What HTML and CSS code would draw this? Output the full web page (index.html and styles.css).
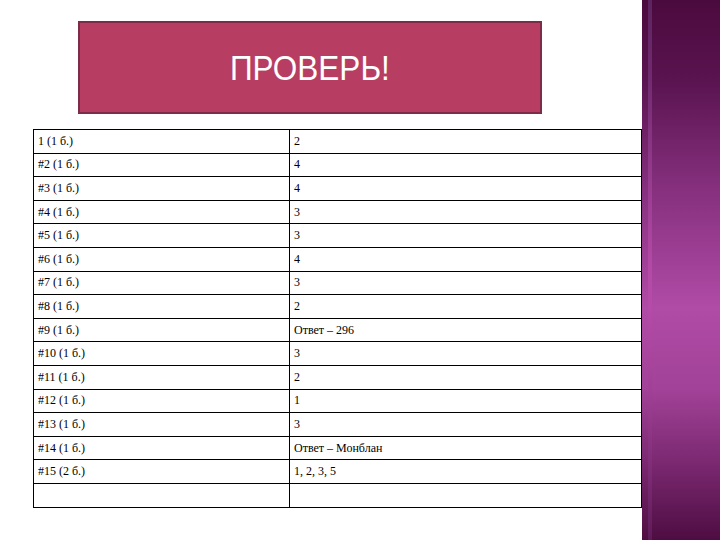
FILE: index.html
```html
<!DOCTYPE html>
<html>
<head>
<meta charset="utf-8">
<link rel="stylesheet" href="styles.css">
</head>
<body>
<div class="slide">
  <div class="main">
    <div class="title"><span class="title-text">ПРОВЕРЬ!</span></div>
    <table class="answers">
      <tr><td>1 (1 б.)</td><td>2</td></tr>
      <tr><td>#2 (1 б.)</td><td>4</td></tr>
      <tr><td>#3 (1 б.)</td><td>4</td></tr>
      <tr><td>#4 (1 б.)</td><td>3</td></tr>
      <tr><td>#5 (1 б.)</td><td>3</td></tr>
      <tr><td>#6 (1 б.)</td><td>4</td></tr>
      <tr><td>#7 (1 б.)</td><td>3</td></tr>
      <tr><td>#8 (1 б.)</td><td>2</td></tr>
      <tr><td>#9 (1 б.)</td><td>Ответ – 296</td></tr>
      <tr><td>#10 (1 б.)</td><td>3</td></tr>
      <tr><td>#11 (1 б.)</td><td>2</td></tr>
      <tr><td>#12 (1 б.)</td><td>1</td></tr>
      <tr><td>#13 (1 б.)</td><td>3</td></tr>
      <tr><td>#14 (1 б.)</td><td>Ответ – Монблан</td></tr>
      <tr><td>#15 (2 б.)</td><td>1, 2, 3, 5</td></tr>
      <tr><td></td><td></td></tr>
    </table>
  </div>
  <div class="strip"><div class="strip-line"></div></div>
</div>
</body>
</html>
```
FILE: styles.css
```css
html, body {
  margin: 0;
  padding: 0;
  background: #ffffff;
}
.slide {
  display: flex;
  width: 720px;
  height: 540px;
  overflow: hidden;
}
.main {
  width: 642px;
  flex: none;
  background: #ffffff;
}
.title {
  box-sizing: border-box;
  width: 464px;
  height: 93px;
  margin: 21px 0 0 78px;
  background: #b83d62;
  border: 2px solid #7c2c48;
  display: flex;
  justify-content: center;
  align-items: center;
  padding: 1px 0 0 0;
}
.title-text {
  font-family: "Liberation Sans", Arial, sans-serif;
  font-size: 35px;
  color: #ffffff;
  display: inline-block;
  transform: scaleX(0.9);
}
.answers {
  margin: 15px 0 0 33px;
  width: 609px;
  border-collapse: collapse;
  font-family: "Liberation Serif", "DejaVu Serif", "Times New Roman", serif;
  font-size: 12px;
  color: #000000;
}
.answers td {
  border: 1px solid #000000;
  height: 23.6px;
  padding: 0 0 0 4px;
  vertical-align: middle;
  box-sizing: border-box;
}
.answers td:first-child {
  width: 256px;
}
.strip {
  flex: 1;
  position: relative;
  background: linear-gradient(180deg, #4b0a3e 0%, #5a1450 15%, #86307e 35%, #b04ba6 57%, #a24298 72%, #7a2870 86%, #4e0d42 100%);
}
.strip-line {
  position: absolute;
  left: 6px;
  top: 0;
  bottom: 0;
  width: 4px;
  background: linear-gradient(180deg, rgba(110,60,130,0.5) 0%, rgba(200,80,180,0.5) 50%, rgba(110,40,110,0.5) 100%);
}
```
